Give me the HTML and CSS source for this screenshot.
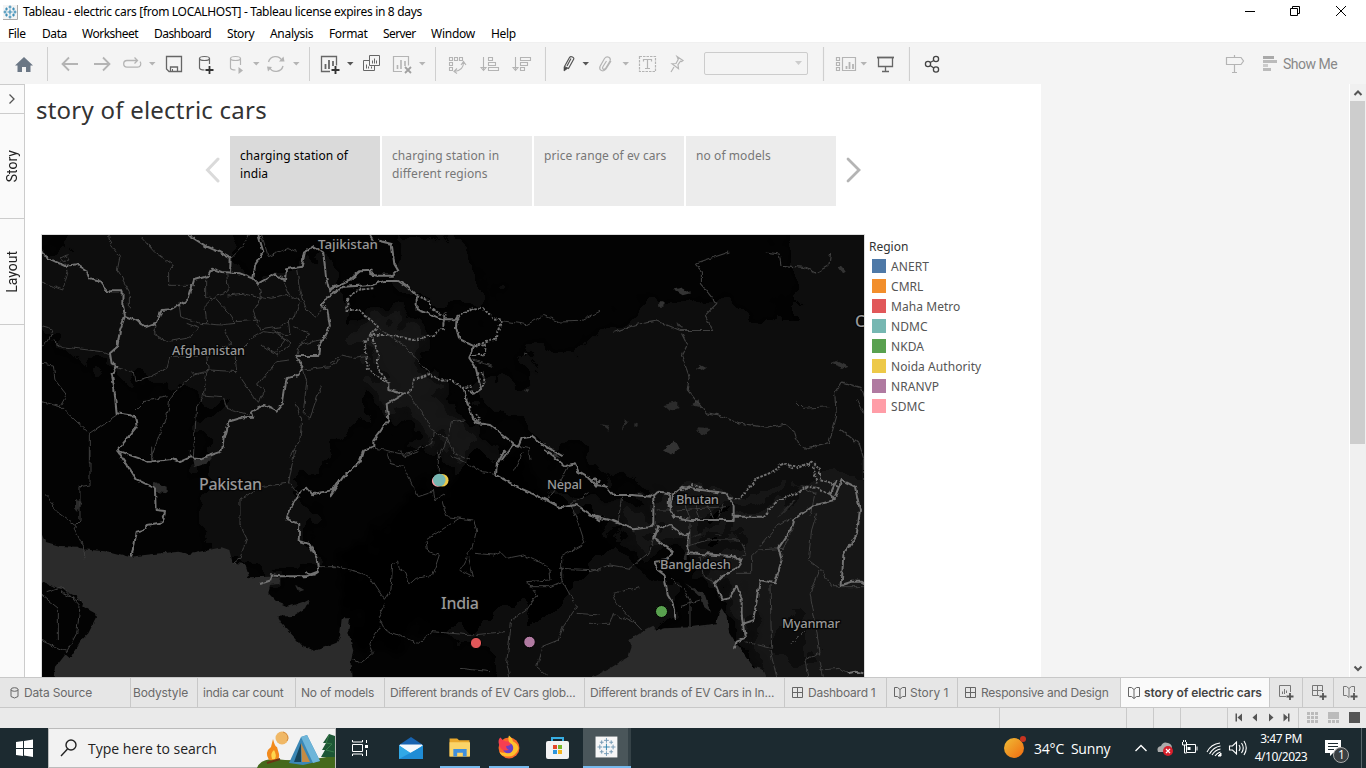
FILE: index.html
```html
<!DOCTYPE html>
<html lang="en">
<head>
<meta charset="utf-8">
<title>Tableau - electric cars</title>
<link rel="stylesheet" href="styles.css">
</head>
<body>
<header class="titlebar">
  <svg class="app-icon" width="16" height="16" viewBox="0 0 16 16"><rect x="1" y="1" width="14.5" height="14.5" fill="#f4f4f4"/><path d="M15.5 1V15.5H1" fill="none" stroke="#aaa"/><g stroke="#3f8fb8" stroke-width="1.2"><path d="M8 5.5v5M5.500 8h5M8 1.500v3M6.500 3h3M8 11.500v3M6.500 13h3M1.500 8h3M3 6.500v3M11.500 8h3M13 6.500v3M4.500 3.500v3M3 5h3M11.500 3.500v3M10 5h3M4.500 9.500v3M3 11h3M11.500 9.500v3M10 11h3"/></g></svg>
  <span class="t caption">Tableau - electric cars [from LOCALHOST] - Tableau license expires in 8 days</span>
  <svg class="winctl" width="110" height="22" viewBox="1240 0 110 22" fill="none" stroke="#000"><path d="M1245 10.500h10M1290.500 7.500h7v7h-7zM1292.500 7.500v-2h7v7h-2M1336 5l10 10M1346 5l-10 10"/></svg>
</header>
<nav class="menubar">
  <span class="t m1">File</span><span class="t m2">Data</span><span class="t m3">Worksheet</span><span class="t m4">Dashboard</span><span class="t m5">Story</span><span class="t m6">Analysis</span><span class="t m7">Format</span><span class="t m8">Server</span><span class="t m9">Window</span><span class="t m10">Help</span>
</nav>
<div class="toolbar">
  <svg width="48" height="41" viewBox="0 43 48 41"><path d="M24 57L33 65.500H30.500V72H26V67H22V72H17.500V65.500H15Z" fill="#6b7785"/><path d="M47.500 47v34" stroke="#cfcfcf"/></svg>
  <svg width="262" height="41" viewBox="48 43 262 41" fill="none" stroke="#b4b4b4">
    <path d="M78 64H63M69 57.500L62.500 64L69 70.500M94 64H109M103 57.500L109.500 64L103 70.500" stroke-width="1.800"/>
    <path d="M137 60.500H127a3.300 3.300 0 0 0 0 6.600h10.500a3.300 3.300 0 0 0 2.500-5.500M134.500 57.500l3 3-3 3" stroke-width="1.300"/>
    <g fill="#b4b4b4" stroke="none"><path d="M149 62h6.500l-3.250 3.500zM253 62h6.500l-3.250 3.500zM293 62h6.500l-3.250 3.500z"/></g>
    <path d="M166.500 56.500h15v15h-12.500l-2.500-2.500zM170.500 71v-4h7v4" stroke="#666" stroke-width="1.300"/><path d="M172.500 69v2.500" stroke="#666"/>
    <g stroke="#666" stroke-width="1.200"><ellipse cx="204.500" cy="58.500" rx="5" ry="2"/><path d="M199.500 58.500V68q.5 2 5 2M209.500 58.500V64"/></g><path d="M209.500 66v8M205.500 70h8" stroke="#333" stroke-width="1.800"/>
    <g stroke-width="1.200"><ellipse cx="235.500" cy="58.500" rx="5" ry="2"/><path d="M230.500 58.500V68q.5 2 5 2M240.500 58.500V65"/></g><path d="M238.500 67v7l4.500-3.500z" fill="#b4b4b4" stroke="none"/>
    <path d="M268.500 62a7.300 7.300 0 0 1 13.500-1.500M283 66a7.300 7.300 0 0 1-13.500 1.500" stroke-width="1.400"/><path d="M279 61.500h5.500l-1-5zM267 66.500l5 .5-4 4.500z" fill="#b4b4b4" stroke="none"/>
    <path d="M309.500 47v34" stroke="#cfcfcf"/>
  </svg>
  <svg width="126" height="41" viewBox="310 43 126 41" fill="none" stroke="#666">
    <path d="M330 71.500h-8.500v-15h15v9" stroke-width="1.300"/><path d="M325.500 69v-5M329 69v-9M333 66v-5" stroke-width="1.800"/><path d="M335.500 66v8M331.500 70h8" stroke="#333" stroke-width="1.900"/>
    <path d="M347 62h6.500l-3.250 3.500z" fill="#555" stroke="none"/>
    <path d="M369.500 55.500h10v10h-10zM369.500 60.500h-6v10h11v-5"/><path d="M372.500 63.500v-3M374.500 63.500v-5M376.500 63.500v-3M366.500 68.500v-4M368.500 68.500v-2M371.500 68.500v-2"/>
    <g stroke="#b4b4b4"><path d="M402 71.500h-8.500v-15h15v9" stroke-width="1.200"/><path d="M397.500 69v-4M401 69v-9M405 66v-5" stroke-width="1.600"/><path d="M405 67l6 6M411 67l-6 6" stroke="#a0a0a0" stroke-width="1.800"/></g>
    <path d="M419 62h6.500l-3.250 3.500z" fill="#b4b4b4" stroke="none"/><path d="M435.500 47v34" stroke="#cfcfcf"/>
  </svg>
  <svg width="110" height="41" viewBox="436 43 110 41" fill="none" stroke="#b4b4b4" stroke-width="1.100">
    <path d="M449.500 57.500h3v3h-3zM454.500 57.500h3v3h-3zM459.500 57.500h3v3h-3zM449.500 62.500h3v3h-3zM449.500 67.500h3v3h-3zM463.500 62.500q0 8-9 9M461 65l2.500-3.500L466 65M457 68.500l-3 3 3 2"/>
    <path d="M483.500 57v13M481 67.500l2.500 3 2.500-3zM488.500 57.500h4v3h-4zM488.500 62.500h7v3h-7zM488.500 67.500h10v3h-10z"/>
    <path d="M515.500 57v13M513 67.500l2.500 3 2.500-3zM520.500 57.500h10v3h-10zM520.500 62.500h7v3h-7zM520.500 67.500h4v3h-4z"/><path d="M545.500 47v34" stroke="#cfcfcf"/>
  </svg>
  <svg width="158" height="41" viewBox="546 43 158 41" fill="none" stroke="#b4b4b4" stroke-width="1.200">
    <path d="M564.500 66.500l5-9q1-1.500 3-.5t1 2.500l-5 9zM567 66l4-7.500" stroke="#555"/><path d="M564 67v4l3.500-2.500z" fill="#444" stroke="#444" stroke-width=".6"/><path d="M582.500 62h6.500l-3.250 3.500z" fill="#555" stroke="none"/>
    <path d="M611 61l-5 8q-2 2.500-4.500 1.500t-1.500-4l4.500-8q2-2.500 4.300-1.200t1.200 3.700l-4.500 7.500q-1.500 1.500-2.500.5t0-2.500l3.500-5.500"/><path d="M622.500 62h6.500l-3.250 3.500z" fill="#b4b4b4" stroke="none"/>
    <path d="M639.500 56.500h16v15h-16z" stroke-dasharray="2.500 1"/><path d="M643.500 61.500v-2h8v2M647.500 59.500v9M645 68.500h5"/>
    <path d="M677 56.500l6 4-1.500 1-1-.3-2.500 3.500.5 4-6.500-5 4-.2 2.200-4-.7-2zM674 67l-3 5"/>
  </svg>
  <span class="dropdown"><svg width="8" height="5" viewBox="0 0 8 5"><path d="M0 0h7L3.500 4z" fill="#ccc"/></svg></span>
  <svg width="102" height="41" viewBox="808 43 102 41" fill="none" stroke="#b4b4b4" stroke-width="1.200"><path d="M823.500 47v34" stroke="#cfcfcf"/>
    <path d="M836.500 57.500h3v3h-3zM836.500 62.500h3v3h-3zM836.500 67.500h3v3h-3zM842.500 57.500h13v13h-13z"/><path d="M846.500 69v-3M849.500 69v-7M853 69v-5" stroke-width="1.800"/><path d="M860.500 62h6.500l-3.250 3.500z" fill="#b4b4b4" stroke="none"/>
    <g stroke="#666"><path d="M877 57.500h17" stroke-width="1.800"/><path d="M878.500 58v8.500h14v-8.500M885.500 66.500v5M882 71.500h7" stroke-width="1.300"/></g><path d="M909.500 47v34" stroke="#cfcfcf"/></svg>
  <svg width="40" height="41" viewBox="910 43 40 41" fill="none" stroke="#444" stroke-width="1.300"><circle cx="928" cy="64" r="2.600"/><circle cx="936" cy="59" r="2.600"/><circle cx="936" cy="69.500" r="2.600"/><path d="M930.200 62.500l3.600-2M930.200 65.500l3.600 2.500"/></svg>
  <div class="showme"><svg width="56" height="41" viewBox="1224 43 56 41" fill="none" stroke="#b4b4b4" stroke-width="1.200"><path d="M1234.500 55v2M1226.500 57.500h14.500l2.500 3.500-2.500 3.500h-14.500zM1234.500 64.500v8M1232 72.500h5"/><g stroke="none" fill="#bbb"><path d="M1263 56h11v3h-11z" fill="#a9a9a9"/><path d="M1263 60h14v3h-14zM1263 68h8v3h-8z"/><path d="M1263 64h5v3h-5z" fill="#ccc"/></g></svg><span class="t show">Show Me</span></div>
</div>
<main class="work">
  <aside class="rail">
    <div class="rail-toggle"><svg width="8" height="10" viewBox="0 0 8 10"><path d="M1.500.5L6 5 1.500 9.500" fill="none" stroke="#555" stroke-width="1.300"/></svg></div>
    <div class="rail-tab"><span>Story</span></div>
    <div class="rail-tab second"><span>Layout</span></div>
  </aside>
  <section class="story">
    <h1><span class="t">story of electric cars</span></h1>
    <div class="points">
      <svg class="arrow" width="16" height="26" viewBox="0 0 16 26"><path d="M13 2L2.500 13 13 24" fill="none" stroke="#dadada" stroke-width="3" stroke-linecap="round"/></svg>
      <div class="point on"><span class="t">charging station of</span><br><span class="t">india</span></div>
      <div class="point"><span class="t">charging station in</span><br><span class="t">different regions</span></div>
      <div class="point"><span class="t">price range of ev cars</span></div>
      <div class="point"><span class="t">no of models</span></div>
      <svg class="arrow next" width="16" height="26" viewBox="0 0 16 26"><path d="M2 2L13 13 2 24" fill="none" stroke="#b4b4b4" stroke-width="2.800" stroke-linecap="round"/></svg>
    </div>
    <div class="viz">
      <svg class="map" width="822" height="443" viewBox="42 235 822 443">
        <defs>
          <filter id="rough" x="0" y="0" width="100%" height="100%" filterUnits="objectBoundingBox" color-interpolation-filters="sRGB"><feTurbulence type="fractalNoise" baseFrequency=".16" numOctaves="2" seed="4"/><feDisplacementMap in="SourceGraphic" scale="4.5" xChannelSelector="R" yChannelSelector="G"/><feGaussianBlur stdDeviation=".3"/></filter>
          <filter id="patchy" x="0" y="0" width="100%" height="100%" filterUnits="objectBoundingBox" color-interpolation-filters="sRGB"><feTurbulence type="fractalNoise" baseFrequency=".03" numOctaves="3" seed="9"/><feDisplacementMap in="SourceGraphic" scale="60" xChannelSelector="R" yChannelSelector="G"/></filter>
          <filter id="soft" x="-20%" y="-20%" width="140%" height="140%"><feGaussianBlur stdDeviation="7"/></filter>
        </defs>
        <rect x="42" y="235" width="822" height="443" fill="#030303"/>
        <!-- relief -->
        <g filter="url(#patchy)">
          <rect x="0" y="200" width="900" height="520" fill="#030303"/>
          <g filter="url(#soft)">
            <path d="M20 250L150 215H230L250 290 330 250 345 300 310 360 260 390 190 400 110 370 40 330Z" fill="#0f0f0f"/>
            <path d="M205 420L280 360 330 300 370 350 350 440 300 480 220 560 200 520Z" fill="#0a0a0a"/>
            <path d="M345 320L395 300 440 400 520 470 640 520 700 530 690 550 600 530 500 500 430 440 385 400Z" fill="#131313"/>
            <path d="M470 400L540 360 640 310 720 300 800 320 900 300V520H780L700 490 620 480 560 450Z" fill="#0b0b0b"/>
            <path d="M395 235h60l40 60-10 15-60-10-30-20Z" fill="#070707"/>
            <path d="M770 200h130v115l-90 5-25-40Z" fill="#090909"/>
            <path d="M640 495L740 490 840 470 900 500V720H780L740 620 700 560Z" fill="#151515"/>
            <path d="M430 560L600 540 690 590 640 640 600 700H520L440 620Z" fill="#0c0c0c"/>
            <path d="M240 480l60 20 20 60-60 20-40-40Z" fill="#0d0d0d"/>
            <path d="M345 555l130-110 140 80-60 80-200 50Z" fill="#060606"/>
            <path d="M780 600l30 10 10 50-25 10-20-30Z" fill="#070707"/>
            <path d="M690 520l90-20 30-30-20 30-80 40Z" fill="#050505"/>
          </g>
        </g>
        <g filter="url(#rough)">
          <rect x="42" y="235" width="822" height="443" fill="none"/>
          <!-- water -->
          <g transform="translate(40 450) scale(.33333)" fill="#2b2b2b">
            <path d="M0 240L15 275 60 288 110 290 130 298 210 305 270 320 340 312 415 305 450 312 545 292 568 300 578 338 615 342 628 382 690 380 720 385 715 402 690 405 685 430 710 455 745 470 790 455 810 445 795 475 760 498 712 500 720 515 790 590 825 602 890 578 900 560 905 505 930 505 925 545 940 600 932 640 935 690H40L45 650 75 612 90 625 120 575 145 550 168 505 165 490 130 470 110 440 70 420 30 405 0 395Z"/>
            <path d="M340 95l40 15v20l-35-5zM460 30l60-15-20 25-35 12zM105 150l20 5-12 30-8-10zM768 405l25 15-15 5z"/>
          </g>
          <g transform="translate(590 400) scale(.33333)" fill="#2b2b2b">
            <path d="M0 835L60 805 115 770 125 740 118 720 150 700 190 680 200 692 225 685 300 682 380 670 385 640 395 625 410 650 418 700 440 735 465 765 490 800 520 810 530 835Z"/>
            <path d="M220 15l45-10v20l-25 8zM30 72l30 5-5 15zM95 90l10-35 12 8zM192 55l30 20zM320 85l45 2-30 20zM130 70l15 3-15 8zM285 550l60 35 18 55-20-15-10-35zM290 440v40l-10 0zM560 350l50-50 10 0-40 40zM300 415l30-18 8 2zM370 398l30 4-10 4z"/>
          </g>
          <g transform="translate(450 120) scale(.3827)" fill="#333"><path d="M583 443l25-5 20 15-20 5zM544 476h14v12h-14zM592 528l20 18-18-5zM645 648l10-8 15 8-12 8zM1014 385l12-3 8 12-10 6zM994 636l15-6 30 15-10 4zM630 745l20-15 3 20zM558 860l30-20 10 20-18 14zM262 876l12-5 15 12zM192 702l18 2-6 8z"/></g>
        </g>
        <!-- province and state lines -->
        <g filter="url(#rough)" fill="none" stroke="#3f3f3f" stroke-width="3" stroke-linejoin="round">
          <rect x="42" y="235" width="822" height="443" stroke="none"/>
          <g transform="translate(40 230) scale(.33333)">
            <path d="M205 15L215 50 240 80 232 120 268 185V235M300 15L345 65 400 105 386 125V166H462M60 85l20-10 10 15-20 5zM75 100l8 30-15 50-65-25M5 290l35 10-15 30-20 20M35 330l30 20 120 15 25 10M5 400l35 5 5 45 35 45-20 35-55-15M62 530L148 610 230 555M148 610V700"/>
            <path d="M497 140v60l30 5 40 45 20 30-45 5-60-5-60-20-5-45M560 130l5 55-35 10-35 35 5 50M628 15l-25 40-30 30M655 160l10 45-60-15-40 5M720 135l30 60-55 10-30-5-25 45 20 55 60-10 45-30 15-50-40-15M770 115l10 70 20 55 30 20 20-30M350 280l-10 30 40 25 60-10 40-30-40-15M555 300l20 40-75 35-110 5-10 35-50 25-45 15-5-30-45-10M500 375l5 50-45 10-70 65-5 40-25 70-25 70M455 430l55-10 80 5-5-50 50-50 35-20 80 10-5-45M590 275l70-5M700 300l55 40-45 35-45-30M500 430l-10 65 60 5 10 35 70 20M600 440l55 80 20-40-25-15 60-70 40-5M710 310l25 20-35 45M760 290l50 20-30 35 80-20M780 340l-10 35M490 500l-20 30-10 150M380 500l-70 15-35 35M665 15l20 65 60-25 25 10M900 390l-30 20-80 10 10 35-10 90 20 20 35-100M765 520l20 50-5 60-30 50"/>
            <path d="M150 660v105l-30 5v100l-20 20 30 60 5 35M20 795l30 50 60 45M335 650v45M448 660v22M765 660l-20 100-85 10-60 40v75l20 40-20 60-20 15M745 755l35 45M830 1010h60"/>
            <path d="M55 1230v-95l-50-40M0 1230l80 35 30-55 10-80-55-60-45 15M60 1085l60 30"/>
          </g>
          <g transform="translate(330 230) scale(.33333)">
            <path d="M145 295l75 50 80 85M235 490l45 65 30 50 42 20 12-50 40-5M352 625l-27 65M352 625l20 45 45 20M310 605l-5 35-80 35-60-15-30-5M0 400l35-25 40 10 30-5M515 272l75 12 50-28 50 20 60-2 60-30M430 390l60 20M550 645l45 10 5 35M580 372l15 3"/>
          </g>
          <g transform="translate(330 450) scale(.33333)">
            <path d="M170 5l10 35 40 10 30 60 15 30 45-15M325 0v65M205 0l20 20 40-15M345 130l-30 20-5-30M335 150l15 50 80 10 10 30-15 60-15 15M388 205l-100 65 5 35 35 10-20 60-50 10-20 18-10-35-20-10-5-25-15 10-5 75-20 30-40-60-30-20-90-22M435 310l55 5 20-10 20 20 50-10 75 35 5 40-70 5 30 40-30 45-45 30-15 130 10 45M410 320l-20 40 40 20-15-60M165 460l-20 40 20 40 50 20 50 20 40-35 120 10 100-10M150 530l-30 50 10 30-40 30-20-10M725 170l20 50 20 60-70 40v70l45 80-40 60-15 40-50 20-15 60 30 25M580 5l-30 60M360 15l100 50 40 10M690 355l120 5M740 490l70 5M600 410l60 0 35-15M650 150l45-60 20-40M720 165l60-40M390 655l90 10"/>
          </g>
          <g transform="translate(590 400) scale(.33333)">
            <path d="M95 290l-10 75M0 515l60-20 60 10 60-50 20-70M150 560l-80 20 10 30 75 80M0 670h60l10-30 60 30M620 5l20 20 80-5M800 0l20 40M290 440l60-20 100 0 20 40-30 20M300 370v70M240 535l40 30 20 40v80M270 620l60-20M440 520h45v-50l20-20 75-5 30-60M510 440l50-60 50-30M660 350l15-70-40-20M680 340l-15 50-10 90 40 30 30 50M690 510l-30 70 15 80-70 70M540 555l5 190-80-20M675 660l15 100-45 20 10 60M540 750l20 80M690 780l10 50M730 560l100 0M280 300l20 55M310 300l20 55M350 310l20 45M400 310l-20 45M260 330l150-10M200 330h50M330 470l10 60 40 20M690 810l60-5 20 15M820 180v60"/>
          </g>
          <g transform="translate(450 120) scale(.3827)"><path d="M730 345l-90 30 17 20v35l40 50-30 30 20 40-85 0-60-25-60 10-55 20M825 345l35 5 5 30 60 5 30 15 35-20 5-35M605 555l15 30-15 30 20 55-5 35 50 60 30 5 50 20 80 15 45-10 25 20 10 30 20 15 60-15 20-70-5-60 20-30 50 15 15 40M1020 808l50 40 12 40"/></g>
        </g>
        <!-- national borders -->
        <g filter="url(#rough)" fill="none" stroke="#727272" stroke-width="6" stroke-linejoin="round">
          <rect x="42" y="235" width="822" height="443" stroke="none"/>
          <g transform="translate(40 230) scale(.33333)">
            <path d="M6 62L18 82 32 88 75 108 110 103 138 120 148 145 175 150 200 184H248L247 220 255 258 290 272 318 292 350 280 365 240 395 238 445 208 462 150 505 138 516 116 545 126 600 130 640 145 655 160 705 132 735 150 738 118 785 110 795 65 822 48 850 68 858 140 868 182 900 165"/>
            <path d="M445 15L500 50 535 65 572 85 570 130M655 15L670 65 645 105 640 145M255 258L240 300 232 350 210 370 215 400 232 410 215 430 222 470 230 550 285 558 290 590 232 662 325 695 395 687 420 696 450 682 485 685 545 665 552 620 565 575 610 562 640 560 635 545 675 525 710 542 728 520 740 445 775 435 790 410 765 378 835 378 838 345 870 290 862 240 845 225 862 200 900 180"/>
            <path d="M232 662L265 710 290 748 345 775 347 840 375 843 368 877 320 885 310 900 290 905 283 945 272 980M660 1062l35-12v-14l20 3h80l40-15-5-40-22-42-32-10 2-50-38-14 10-30 35-60 16-5 16 20 60-13 20-30"/><path d="M800 1025q10 20 35 0"/>
          </g>
          <g transform="translate(330 230) scale(.33333)">
            <path d="M120 15l10 18M145 32l40 10 8 60 12 20-15 15-50 0-20-5 5-10-35 2-30 25-65 30M0 195l40-25 90-5 30-12 45 0 30 20 25 25v40l40 15 40 15 45 0M380 262l-2 30 10 35 40 20-10 40 20 30 15 60-20 15-15-12M400 470l10 40 15 50 20 20 35 5 70 55 15 10 10-25 30-5 35 25 60 35M550 642l-35 48M178 460l0 20 42 12-50 30 5 50-45 60 0 20-28 10-10 35"/>
            <g stroke-dasharray="8 4"><path d="M130 175l-50 5-28 30v30l35 0 35 30 22 20-40 45 10 85 30 20 30 20-30-45 0-45-20-55 65 0 60 15 60-15 30-20 5-45M380 262l50-28 35 5 20 25 30 5-20 60-65 18M260 195l40 20 0 20 40 20M220 492l30-15 0-30 50-15 35 20 30-5 30 28 30-5M430 350l38-5-5 30-40 0M440 430l20 0 5 35-20 15M435 550l15 20-15 10"/></g>
          </g>
          <g transform="translate(330 450) scale(.33333)"><path d="M100 0L90 35 40 80 0 138M525 0L500 45 498 75 560 110 650 150 690 172 740 165 810 212M645 0L705 48 735 40 745 65 780 85 798 110 810 90"/></g>
          <g transform="translate(590 400) scale(.33333)">
            <path d="M0 240l15-5 5 20 30 5 20 25 60 0 50 5 30-15 28 5-2 40 15 30 50 10 130 0 0-45-25-35-70-10-60-10-30 25-5 40M190 290l0 60 0 30-60 8-60-25-75-18M200 375l20 10 20-10 40 30 15-5v60l130 8 30 12-20 30-40 20-20 20 20 50 25-5 20-40 15 40v50l10 70-25 10-5 20M205 380l-12 35 55 40-15 25-40 5 10 25 20 15 10 60 15 25 10 50M460 670l30-10 20-120 45 10 20-70-10-35 40-60 10-30 60-40 60-15-15-15 20-45M430 350h90M735 290l20-50 40 20 15 70-10 75-40 60-5 90 30-10 30 0 15 10M770 820l30-5 20 5"/>
            <g stroke-dasharray="8 4"><path d="M420 295h30l50-60 50-20 30-25 40 15 45-20 25 25 0 30 55 20M520 350l40-45 70-30 20-15 40 5 35 25M670 200l10 50M270 270l40-15 30 10"/></g>
          </g>
        </g>
        <g class="maptext">
          <text x="318" y="249" textLength="60" lengthAdjust="spacingAndGlyphs">Tajikistan</text><text x="172" y="355" textLength="73" lengthAdjust="spacingAndGlyphs">Afghanistan</text><text class="big" x="199" y="490" textLength="63">Pakistan</text><text x="547" y="489" textLength="35">Nepal</text><text x="676" y="504" textLength="43">Bhutan</text><text x="660" y="569" textLength="71">Bangladesh</text><text class="big" x="441" y="609" textLength="38">India</text><text x="782" y="628" textLength="58">Myanmar</text><text class="big" x="855" y="327">C</text>
        </g>
        <g><path d="M437 473.500h6a7 7 0 0 1 0 14h-6a7 7 0 0 1 0-14z" fill="#000"/><circle cx="437.700" cy="481" r="5.800" fill="#ff9da7"/><circle cx="442.200" cy="480.300" r="6.300" fill="#edc948"/><circle cx="439.300" cy="480" r="6.300" fill="#76b7b2"/></g>
        <g stroke="#000"><circle cx="476" cy="643" r="5.600" fill="#e15759"/><circle cx="529.500" cy="642" r="5.800" fill="#b07aa1"/><circle cx="661.500" cy="611.500" r="6" fill="#59a14f"/></g>
      </svg>
      <div class="legend">
        <div class="legend-title"><span class="t">Region</span></div>
        <div class="key"><i class="c1"></i><span class="t">ANERT</span></div>
        <div class="key"><i class="c2"></i><span class="t">CMRL</span></div>
        <div class="key"><i class="c3"></i><span class="t">Maha Metro</span></div>
        <div class="key"><i class="c4"></i><span class="t">NDMC</span></div>
        <div class="key"><i class="c5"></i><span class="t">NKDA</span></div>
        <div class="key"><i class="c6"></i><span class="t">Noida Authority</span></div>
        <div class="key"><i class="c7"></i><span class="t">NRANVP</span></div>
        <div class="key"><i class="c8"></i><span class="t">SDMC</span></div>
      </div>
    </div>
  </section>
  <div class="void"></div>
  <div class="scroll"><svg width="17" height="17" viewBox="0 0 17 17"><path d="M4.500 11L8 7.500 11.500 11" fill="none" stroke="#555" stroke-width="2"/></svg><div class="thumb"></div><svg class="down" width="17" height="17" viewBox="0 0 17 17"><path d="M4.500 6.500L8 10 11.500 6.500" fill="none" stroke="#555" stroke-width="2"/></svg></div>
</main>
<div class="tabs">
  <div class="tab w1"><svg width="9" height="12" viewBox="0 0 9 12" fill="none" stroke="#666"><ellipse cx="4.500" cy="2.500" rx="3.500" ry="1.800"/><path d="M1 2.500v7q3.500 3 7 0v-7"/></svg><span class="t">Data Source</span></div>
  <div class="tab w2"><span class="t">Bodystyle</span></div>
  <div class="tab w3"><span class="t">india car count</span></div>
  <div class="tab w4"><span class="t">No of models</span></div>
  <div class="tab w5"><span class="t">Different brands of EV Cars glob...</span></div>
  <div class="tab w6"><span class="t">Different brands of EV Cars in In...</span></div>
  <div class="tab w7"><svg width="12" height="12" viewBox="0 0 12 12" fill="none" stroke="#666"><path d="M.5.5h10v10H.5zM5.500.5v10M.5 5.500h10"/></svg><span class="t">Dashboard 1</span></div>
  <div class="tab w8"><svg width="12" height="13" viewBox="0 0 12 13" fill="none" stroke="#666"><path d="M.5 1.500h3l2.500 2 2.500-2h3v9h-3L6 12.500l-2.500-2h-3zM6 3.500v9"/></svg><span class="t">Story 1</span></div>
  <div class="tab w9"><svg width="12" height="12" viewBox="0 0 12 12" fill="none" stroke="#666"><path d="M.5.5h10v10H.5zM5.500.5v10M.5 5.500h10"/></svg><span class="t">Responsive and Design</span></div>
  <div class="tab w10 active"><svg width="12" height="13" viewBox="0 0 12 13" fill="none" stroke="#666"><path d="M.5 1.500h3l2.500 2 2.500-2h3v9h-3L6 12.500l-2.500-2h-3zM6 3.500v9"/></svg><span class="t">story of electric cars</span></div>
  <div class="tab w11"><svg width="17" height="16" viewBox="0 0 17 16" fill="none" stroke="#777"><path d="M8 11.500H1.500v-11h11V7M4.500 9V6.500M6.500 9V4M8.500 8V5.500"/><path d="M12 8v7M8.500 11.500h7" stroke="#555" stroke-width="1.800"/></svg></div>
  <div class="tab w12"><svg width="17" height="16" viewBox="0 0 17 16" fill="none" stroke="#777"><path d="M8 10.500H1.500v-10h10V7M6.500.5v10M1.500 5.500h10"/><path d="M12 8v7M8.500 11.500h7" stroke="#555" stroke-width="1.800"/></svg></div>
  <div class="tab w13"><svg width="17" height="16" viewBox="0 0 17 16" fill="none" stroke="#777"><path d="M7 12.500l-2.500-2h-3v-9h3l2.500 2 2.500-2h3V7M7 3.500v9"/><path d="M12 8v7M8.500 11.500h7" stroke="#555" stroke-width="1.800"/></svg></div>
</div>
<div class="status">
  <svg width="367" height="20" viewBox="999 708 367 20"><path d="M999.500 708v20M1126.500 708v20M1153.500 708v20M1180.500 708v20M1227.500 708v20M1298.500 708v20" stroke="#cacaca"/><g fill="#555"><path d="M1235.500 713.500h1.500v8h-1.500zM1242 713.500v8l-4.500-4zM1257 713.500v8l-4.500-4zM1269 713.500v8l4.500-4zM1283.500 713.500v8l4.500-4zM1288 713.500h1.500v8h-1.500zM1349 712h11v11h-11z"/></g><g fill="#bbb"><path d="M1307 712h3v3h-3zM1311 712h3v3h-3zM1315 712h3v3h-3zM1307 716h3v3h-3zM1311 716h3v3h-3zM1315 716h3v3h-3zM1307 720h3v3h-3zM1311 720h3v3h-3zM1315 720h3v3h-3zM1328 712h11v7h-11zM1328 720h3v3h-3zM1332 720h3v3h-3zM1336 720h3v3h-3z"/></g></svg>
</div>
<footer class="taskbar">
  <svg width="48" height="40" viewBox="0 728 48 40"><path d="M16 742l7-1v7h-7zM24 741l9-1.500v8.500h-9zM16 749h7v7l-7-1zM24 749h9v8l-9-1.500z" fill="#fff"/></svg>
  <div class="search">
    <svg width="39" height="38" viewBox="49 729 39 38" fill="none" stroke="#222" stroke-width="1.400"><circle cx="71" cy="745" r="5"/><path d="M67.500 749L61 756"/></svg><span class="t">Type here to search</span>
    <svg class="camp" width="79" height="39" viewBox="257 729 79 39"><path d="M258 768q3-9 18-9 30 4 60-4v13z" fill="#456a1c"/><circle cx="283" cy="738" r="6.500" fill="#f0b866"/><path d="M284 732a6 6 0 0 1 4 9" stroke="#d58e45" fill="none"/><path d="M290 763l12-26 6-2 13 26-17 4z" fill="#3b87b5"/><path d="M302 737l6-2 13 26-7 2z" fill="#6db5d9"/><path d="M302 743l-7 19h7z" fill="#17455c"/><path d="M302 743l9 19h-8z" fill="#c58b43"/><path d="M270 760q-5-8 2-13l2-8q2 8 4 8l2 7q1 5-3 7z" fill="#f28a1c"/><path d="M273 759q-2-6 2-9 3 5 1 9z" fill="#ffd74e"/><path d="M268 763l13-4" stroke="#6a3514" stroke-width="2"/><path d="M330 734l-6 9h3l-4 7h3l-4 7h14v-21z" fill="#1d5635"/><path d="M330 735l-3 8 6 1-6 6 8 2" stroke="#387c4a" fill="none"/></svg>
  </div>
  <svg width="48" height="40" viewBox="336 728 48 40" fill="none" stroke="#fff"><path d="M352.500 744.500h10v7h-10zM352.500 740v2h10v-2M352.500 756v-2h10v2M366.500 740v3M366.500 750v6"/><path d="M366.500 745v3" stroke-width="3"/></svg>
  <svg width="56" height="40" viewBox="384 728 56 40"><path d="M399 745l12-8 12 8v14h-24z" fill="#1763b0"/><path d="M400 744.500h22v7l-11 5-11-5z" fill="#eef6fc"/><path d="M399 745l12 8 12-8v14h-24z" fill="#31a8e6"/><path d="M399 745h24l-12 8z" fill="#f4f9fd"/><path d="M399 759l24-13v13z" fill="#1f8cd5"/></svg>
  <svg class="run" width="40" height="40" viewBox="440 728 40 40"><path d="M449 739h8l2 2h11v17h-21z" fill="#e9a82c"/><path d="M449 743h21.500v15H449z" fill="#fbd468"/><path d="M453 758v-8h14v8h-4v-4h-6v4z" fill="#3f8fdc"/></svg>
  <i class="gap9"></i>
  <svg class="run" width="40" height="40" viewBox="489 728 40 40"><circle cx="509" cy="749" r="11" fill="#f9672b"/><path d="M509 736q4 3 4 6 6 3 6 8-3 8-11 8t-9-5q4 2 9 0 5-3 3-7-4-5-2-10z" fill="#ffc02d"/><circle cx="508" cy="749" r="5.500" fill="#6a3fc6"/><path d="M498 743q0-4 2-5 2 3 5 4 5 0 6 3-2 2-5 2 0 3 3 4-5 2-8-1-3-3-3-7z" fill="#f63f50"/></svg>
  <svg width="54" height="40" viewBox="529 728 54 40"><path d="M552 743v-5h11v5" fill="none" stroke="#37aee3" stroke-width="2"/><rect x="546" y="741" width="23" height="18" rx="2" fill="#f3f3f3"/><path d="M553 745h4v4h-4z" fill="#e5492b"/><path d="M558 745h4v4h-4z" fill="#78b82a"/><path d="M553 750h4v4h-4z" fill="#2c95dd"/><path d="M558 750h4v4h-4z" fill="#f6b51e"/></svg>
  <svg class="run current" width="45" height="40" viewBox="583 728 45 40"><path d="M595 737h23v22h-23z" fill="#f7f7f7"/><g stroke="#7399b3" stroke-width="1"><path d="M606.500 744.500v7M603 748h7" stroke="#3386ae"/><path d="M606.500 738.500v5M604 741h5M606.500 752.500v5M604 755h5M599.500 745.500v5M597 748h5M613.500 745.500v5M611 748h5M601.500 741v4M599.500 743h4M611.500 741v4M609.500 743h4M601.500 751v4M599.500 753h4M611.500 751v4M609.500 753h4"/></g></svg><i class="stack"></i>
  <div class="tray">
    <svg width="30" height="40" viewBox="1001 728 30 40"><defs><linearGradient id="sun" x1="0" y1="0" x2="1" y2="1"><stop offset="0" stop-color="#efbd36"/><stop offset="1" stop-color="#f06a10"/></linearGradient></defs><circle cx="1014" cy="748" r="10" fill="url(#sun)"/><circle cx="1023" cy="739" r="3" fill="#c83420"/></svg>
    <span class="t deg">34°C&nbsp; Sunny</span>
    <svg class="trayicons" width="116" height="40" viewBox="1132 728 116 40" fill="none" stroke="#fff"><path d="M1135.500 751l5.500-5.500 5.500 5.500" stroke-width="1.400"/><path d="M1158 752q-2-5 3-6 2-5 7-3 4 1 4 5v4z" fill="#aaa" stroke="none"/><circle cx="1168" cy="751" r="5" fill="#d8202c" stroke="none"/><path d="M1166 749l4 4M1170 749l-4 4" stroke-width="1.200"/><path d="M1186.500 744.500h9v8h-9zM1197 746.500v4M1182.500 742v3h4v-3M1184.500 745v8h2M1183.500 742v-2M1185.500 742v-2"/><path d="M1189 750v-3" stroke-width="3"/><path d="M1207 752q4-8 13-9M1209.500 754q4-7 11-8M1212 755q3-5 8.500-6M1215 756q2-3 5.500-4" stroke-width="1.100"/><path d="M1218 756l3-3v3z" fill="#fff"/><path d="M1229.500 746h3l4-4v12l-4-4h-3zM1239 745q2 3 0 6M1241.500 743q3.500 5 0 10M1244 741q4.500 7 0 14" stroke-width="1.100"/></svg>
    <div class="clock"><span class="t">3:47 PM</span><span class="t">4/10/2023</span></div>
    <svg class="notif" width="46" height="40" viewBox="1320 728 46 40"><path d="M1325 740h16v13h-8l-3 3v-3h-5z" fill="#fff"/><path d="M1328 743.500h10M1328 746.500h10M1328 749.500h6" stroke="#1c2a30"/><circle cx="1341" cy="755" r="7.500" fill="#3a3f42" stroke="#aaa"/><text x="1338" y="759" fill="#fff" font-family="Open Sans" font-size="12">1</text><path d="M1361.500 728v40" stroke="#59656a"/></svg>
  </div>
</footer>
</body>
</html>
```

FILE: styles.css
```css
* { box-sizing: border-box; }
body { margin: 0; width: 1366px; height: 768px; overflow: hidden; display: flex; flex-direction: column; background: #fff; font-family: "Noto Sans", "Open Sans", sans-serif; font-size: 12px; color: #000; }
svg { display: block; flex: none; }
.t { white-space: nowrap; display: inline-block; }
.titlebar { height: 23px; flex: none; display: flex; align-items: center; padding-left: 2px; }
.app-icon { margin-right: 5px; }
.caption { letter-spacing: -.315px; }
.winctl { margin-left: auto; margin-right: 16px; }
.menubar { height: 20px; flex: none; display: flex; align-items: center; padding-left: 8px; padding-top: 2px; gap: 16px; border-bottom: 1px solid #f0f0f0; line-height: 20px; letter-spacing: -.4px; }
.m1 { width: 18px; } .m2 { width: 24px; } .m3 { width: 56px; letter-spacing: -.5px; } .m4 { width: 57px; letter-spacing: -.55px; } .m5 { width: 27px; }
.m6 { width: 43px; letter-spacing: -.3px; } .m7 { width: 38px; } .m8 { width: 32px; letter-spacing: -.6px; } .m9 { width: 44px; letter-spacing: -.25px; } .m10 { width: 25px; letter-spacing: -.3px; }
.toolbar { height: 41px; flex: none; display: flex; align-items: center; background: #f4f4f4; }
.dropdown { width: 104px; height: 23px; border: 1px solid #ccc; border-radius: 2px; display: flex; align-items: center; justify-content: flex-end; padding-right: 4px; }
.showme { margin-left: auto; display: flex; align-items: center; width: 142px; gap: 3px; }
.show { font-family: Roboto, sans-serif; font-size: 14px; letter-spacing: -.5px; color: #888; }
.work { height: 593px; flex: none; display: flex; overflow: hidden; }
.rail { width: 25px; flex: none; background: #fafafa; border-right: 1px solid #ccc; border-top: 1px solid #ccc; }
.rail-toggle { height: 29px; border-bottom: 1px solid #ccc; display: flex; align-items: center; justify-content: center; }
.rail-tab { height: 105px; border-bottom: 1px solid #ccc; display: flex; align-items: center; justify-content: center; font: 14px Roboto, sans-serif; color: #222; }
.rail-tab.second { height: 106px; }
.rail-tab span { writing-mode: vertical-rl; transform: rotate(180deg); }
.story { width: 1016px; flex: none; background: #fff; padding: 9px 0 0 11px; }
h1 { margin: 0; font-size: 24px; font-weight: 400; line-height: 33px; height: 43px; color: #333; letter-spacing: .23px; }
.points { display: flex; align-items: center; gap: 2px; height: 70px; margin-left: 169px; }
.arrow { margin: -2px 7px 0 0; }
.arrow.next { margin: -2px 0 0 8px; }
.point { width: 150px; height: 70px; background: #ececec; color: #777; padding: 11px 10px; line-height: 18px; font-size: 12px; letter-spacing: .08px; }
.point.on { background: #dadada; color: #000; }
.viz { display: flex; margin-left: 5px; margin-top: 28px; }
.map { box-shadow: 0 0 0 1px #ddd; margin: 1px 0 0 1px; }
.maptext { font-family: "Noto Sans", sans-serif; font-size: 13px; font-weight: 500; fill: #989898; stroke: #050505; stroke-width: 2.5px; paint-order: stroke; }
.maptext .big { font-size: 16px; }
.legend { margin-left: 5px; padding-top: 3px; color: #333; }
.legend-title { line-height: 19px; height: 19px; }
.key { display: flex; align-items: center; height: 20px; gap: 5px; padding-left: 3px; color: #555; letter-spacing: .06px; }
.key i { width: 14px; height: 14px; }
.c1 { background: #4e79a7; } .c2 { background: #f28e2b; } .c3 { background: #e15759; } .c4 { background: #76b7b2; }
.c5 { background: #59a14f; } .c6 { background: #edc948; } .c7 { background: #b07aa1; } .c8 { background: #ff9da7; }
.void { flex: 1; background: #f4f4f4; }
.scroll { width: 17px; background: #f0f0f0; border-left: 1px solid #fff; display: flex; flex-direction: column; }
.thumb { height: 343px; width: 15px; background: #cdcdcd; }
.down { margin-top: auto; }
.tabs { height: 30px; flex: none; display: flex; background: #e6e6e6; border-top: 1px solid #c8c8c8; }
.tab { display: flex; align-items: center; border-right: 1px solid #c8c8c8; padding-left: 5px; color: #6a6a6a; font: 12px Inter, sans-serif; gap: 5px; overflow: hidden; letter-spacing: -.24px; }
.w1 { width: 131px; padding-left: 10px; letter-spacing: -.15px; } .w2 { width: 67px; padding-left: 2px; letter-spacing: -.15px; } .w3 { width: 98px; } .w4 { width: 89px; } .w5 { width: 200px; } .w6 { width: 200px; }
.w7 { width: 102px; padding-left: 7px; gap: 4px; } .w8 { width: 71px; padding-left: 7px; gap: 4px; letter-spacing: 0; } .w9 { width: 163px; padding-left: 7px; gap: 4px; } .w10 { width: 149px; padding-left: 7px; gap: 4px; letter-spacing: -.1px; }
.w11 { width: 33px; padding-left: 8px; } .w12 { width: 31px; padding-left: 8px; } .w13 { width: 32px; padding-left: 8px; border: 0; }
.active { background: #fafafa; font-weight: 600; color: #444; }
.status { height: 21px; flex: none; background: #eaeaea; border-top: 1px solid #c8c8c8; display: flex; justify-content: flex-end; }
.taskbar { height: 40px; flex: none; background: #1c2a30; display: flex; color: #fff; }
.search { width: 288px; height: 40px; background: #f2f2f2; border: 1px solid #bbb; display: flex; align-items: center; color: #222; font-size: 14px; font-family: "Open Sans", sans-serif; }
.camp { margin-left: auto; }
.run { border-bottom: 2px solid #76b9ed; }
.gap9 { width: 9px; }
.current { background: #4a565a; }
.stack { width: 3px; background: #354247; border-bottom: 2px solid #76b9ed; }
.tray { margin-left: auto; width: 365px; display: flex; align-items: center; }
.deg { font-size: 14px; font-family: "Open Sans", sans-serif; width: 80px; margin-left: 3px; letter-spacing: -.2px; }
.trayicons { margin-left: 18px; }
.clock { width: 66px; display: flex; flex-direction: column; align-items: center; line-height: 18px; letter-spacing: -.5px; }
.notif { margin-left: auto; }
```
